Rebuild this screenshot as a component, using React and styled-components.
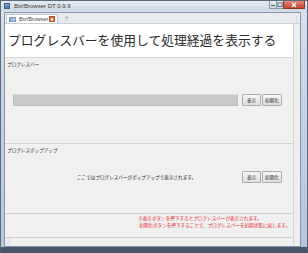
import React from 'react';
import styled, { createGlobalStyle } from 'styled-components';

const GlobalStyle = createGlobalStyle`
  html, body {
    margin: 0;
    padding: 0;
    width: 308px;
    height: 253px;
    overflow: hidden;
    background: #fff;
  }
  body {
    font-family: "Noto Sans CJK JP", "Noto Sans", sans-serif;
  }
`;

const App = () => {
  return (
    <Window>
      <GlobalStyle />
      <TitleBar>
        <AppIcon />
        <TitleText>Biz/Browser DT 0.9.9</TitleText>
        <Controls>
          <Ctrl>
            <svg width="7" height="5" viewBox="0 0 7 5">
              <rect x="1" y="3" width="5" height="1.2" fill="#5a6676" />
            </svg>
          </Ctrl>
          <Ctrl>
            <svg width="7" height="5" viewBox="0 0 7 5">
              <rect x="1" y="0.5" width="5" height="4" fill="none" stroke="#5a6676" strokeWidth="1" />
            </svg>
          </Ctrl>
          <CloseBtn>
            <svg width="8" height="6" viewBox="0 0 8 6">
              <path d="M2 1 L6 5 M6 1 L2 5" stroke="#fff" strokeWidth="1.3" />
            </svg>
          </CloseBtn>
        </Controls>
      </TitleBar>

      <Frame>
        <TabBar>
          <Tab>
            <TabIcon />
            <TabLabel>Biz/Browser</TabLabel>
            <TabClose>
              <svg width="5" height="5" viewBox="0 0 5 5">
                <rect x="1" y="1" width="3" height="3" fill="#fff" />
              </svg>
            </TabClose>
          </Tab>
          <NewTab>+</NewTab>
          <MenuDots>⋮</MenuDots>
        </TabBar>

        <Body>
          <Content>
            <Heading>プログレスバーを使用して処理経過を表示する</Heading>

            <Section $height={86}>
              <SectionLabel>プログレスバー</SectionLabel>
              <Row $top={27}>
                <Lead>
                  <Progress />
                </Lead>
                <Btn>表示</Btn>
                <Btn>初期化</Btn>
              </Row>
            </Section>

            <Section $height={70}>
              <SectionLabel>プログレスポップアップ</SectionLabel>
              <Row $top={18}>
                <Lead>
                  <PopupText>ここではプログレスバーがポップアップで表示されます。</PopupText>
                </Lead>
                <Btn>表示</Btn>
                <Btn>初期化</Btn>
              </Row>
            </Section>

            <NoteArea>
              <Note>
                <div>※表示ボタンを押下するとプログレスバーが表示されます。</div>
                <div>&nbsp;初期化ボタンを押下することで、プログレスバーを初期状態に戻します。</div>
              </Note>
            </NoteArea>

            <StatusBar />
          </Content>
          <SideGap />
        </Body>
      </Frame>
    </Window>
  );
};

const Window = styled.div`
  width: 308px;
  height: 253px;
  box-sizing: border-box;
  display: flex;
  flex-direction: column;
  background: linear-gradient(180deg, #d9e2ec 0%, #c5d4e4 40%, #b4c6da 100%);
  border: 1px solid #5b6b7e;
  border-bottom: 6px solid #46566a;
`;

const TitleBar = styled.div`
  height: 10px;
  display: flex;
  align-items: center;
  padding-left: 3px;
  background: linear-gradient(180deg, #e4eaf1 0%, #cdd8e4 100%);
`;

const AppIcon = styled.div`
  width: 6px;
  height: 6px;
  background: linear-gradient(180deg, #7fa2cc, #4c77ad);
  border: 1px solid #3d5f8a;
  box-sizing: border-box;
`;

const TitleText = styled.div`
  margin-left: 4px;
  font-family: "Liberation Sans", Arial, sans-serif;
  font-size: 6px;
  color: #3a3a3a;
  line-height: 10px;
`;

const Controls = styled.div`
  margin-left: auto;
  margin-right: 2px;
  display: flex;
  align-self: flex-start;
  height: 8px;
`;

const Ctrl = styled.div`
  width: 8px;
  height: 8px;
  display: flex;
  align-items: center;
  justify-content: center;
  background: linear-gradient(180deg, #e9eef4, #c8d3df);
  border: 1px solid #8a9aad;
  border-top: none;
  box-sizing: border-box;
  margin-left: -1px;
`;

const CloseBtn = styled.div`
  width: 22px;
  height: 8px;
  display: flex;
  align-items: center;
  justify-content: center;
  background: linear-gradient(180deg, #e5897d, #c8432f);
  border: 1px solid #8d3225;
  border-top: none;
  box-sizing: border-box;
  margin-left: -1px;
`;

const Frame = styled.div`
  flex: 1;
  display: flex;
  flex-direction: column;
  margin: 1px 6px 0 3px;
  border: 1px solid #8396ad;
  background: #f0f0f0;
  min-height: 0;
`;

const TabBar = styled.div`
  height: 10px;
  display: flex;
  align-items: flex-end;
  background: #e9ecef;
  border-bottom: 1px solid #c9ced4;
  padding-left: 1px;
  position: relative;
`;

const Tab = styled.div`
  width: 52px;
  height: 9px;
  display: flex;
  align-items: center;
  background: #fff;
  border: 1px solid #c3c8ce;
  border-bottom: none;
  box-sizing: border-box;
  padding-left: 2px;
`;

const TabIcon = styled.div`
  width: 7px;
  height: 5px;
  background: linear-gradient(90deg, #86a7d0, #b9cbe2);
  border: 1px solid #7d96b6;
  box-sizing: border-box;
`;

const TabLabel = styled.div`
  margin-left: 3px;
  font-family: "Liberation Sans", Arial, sans-serif;
  font-size: 5.5px;
  color: #444;
  line-height: 8px;
`;

const TabClose = styled.div`
  margin-left: auto;
  margin-right: 2px;
  width: 6px;
  height: 6px;
  display: flex;
  align-items: center;
  justify-content: center;
  background: #e0693b;
  border: 0.5px solid #b8502a;
  box-sizing: border-box;
`;

const NewTab = styled.div`
  margin-left: 6px;
  font-family: "Liberation Sans", Arial, sans-serif;
  font-size: 9px;
  line-height: 9px;
  color: #9aa2aa;
`;

const MenuDots = styled.div`
  position: absolute;
  right: 0;
  top: 1px;
  font-size: 7px;
  line-height: 8px;
  color: #b0b5ba;
`;

const Body = styled.div`
  flex: 1;
  display: flex;
  min-height: 0;
`;

const Content = styled.div`
  flex: 1;
  display: flex;
  flex-direction: column;
  border-right: 1px solid #d4d7da;
`;

const SideGap = styled.div`
  width: 6px;
  background: #eceef0;
`;

const Heading = styled.div`
  height: 33px;
  background: #fff;
  padding-left: 3px;
  font-size: 12.8px;
  line-height: 32px;
  color: #2a2a2a;
  white-space: nowrap;
  border-bottom: 1px solid #d6d6d6;
`;

const Section = styled.div`
  height: ${(p) => p.$height}px;
  box-sizing: border-box;
  display: flex;
  flex-direction: column;
  border-bottom: 1px solid #d2d2d2;
  box-shadow: 0 1px 0 #fff;
  background: #f0f0f0;
`;

const SectionLabel = styled.div`
  font-size: 4.6px;
  line-height: 6px;
  color: #333;
  padding: 3px 0 0 2px;
`;

const Row = styled.div`
  display: flex;
  align-items: center;
  gap: 1px;
  margin-top: ${(p) => p.$top}px;
`;

const Lead = styled.div`
  width: 236px;
  display: flex;
  align-items: center;
`;

const Progress = styled.div`
  width: 225px;
  height: 12px;
  margin-left: 8px;
  box-sizing: border-box;
  background: #c9c9c9;
  border: 1px solid #bdbdbd;
  border-top-color: #dcdcdc;
`;

const Btn = styled.div`
  height: 12px;
  padding: 0 2px;
  min-width: 19px;
  box-sizing: border-box;
  display: flex;
  align-items: center;
  justify-content: center;
  font-size: 4.6px;
  color: #222;
  background: linear-gradient(180deg, #f6f6f6, #dedede);
  border: 1px solid #adadad;
  border-radius: 1px;
`;

const PopupText = styled.div`
  font-size: 4.6px;
  color: #222;
  margin-left: 72px;
  white-space: nowrap;
`;

const NoteArea = styled.div`
  flex: 1;
  display: flex;
  justify-content: flex-end;
  background: #f0f0f0;
  border-bottom: 1px solid #d0d0d0;
`;

const Note = styled.div`
  margin-top: 1px;
  margin-right: 3px;
  font-size: 4.6px;
  line-height: 7px;
  color: #e8242c;
  white-space: nowrap;
`;

const StatusBar = styled.div`
  height: 8px;
  background: #f0f0f0;
  border-left: 6px solid #e6e8ea;
`;

export default App;
